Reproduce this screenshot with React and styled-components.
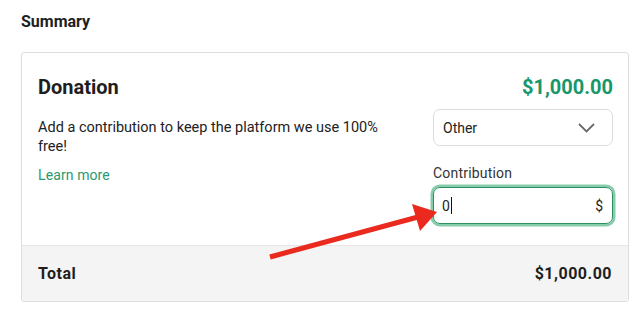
import React from 'react'
import styled, {createGlobalStyle} from 'styled-components'

const Global = createGlobalStyle`
body
{
  margin: 0;
  background: #ffffff;
  font-family: Roboto, "Liberation Sans", sans-serif;
  color: #222222;
}
`

const Page = styled.div`
position: relative;
width: 644px;
height: 316px;
padding: 12px 0 0 21px;
box-sizing: border-box;
`

const Heading = styled.h3`
margin: 0 0 20px 0;
font-size: 16px;
line-height: 20px;
font-weight: 700;
color: #1e1e1e;
`

const Card = styled.div`
width: 608px;
box-sizing: border-box;
border: 1px solid #dedede;
border-radius: 3px;
overflow: hidden;
`

const Body = styled.div`
padding: 21px 15px 21px 16px;
`

const HeaderRow = styled.div`
display: flex;
justify-content: space-between;
align-items: center;
height: 26px;
`

const Title = styled.h2`
margin: 0;
font-size: 20px;
font-weight: 700;
color: #1e1e1e;
`

const Amount = styled.span`
font-size: 20px;
font-weight: 700;
color: ${p => p.green ? "#17976a" : "#1e1e1e"};
`

const Content = styled.div`
display: flex;
justify-content: space-between;
margin-top: 9px;
`

const Left = styled.div`
width: 350px;
padding-top: 9px;
`

const Text = styled.p`
margin: 0;
font-size: 14.5px;
line-height: 19px;
letter-spacing: 0;
color: #222222;
`

const Link = styled.a`
display: block;
margin-top: 9px;
font-size: 14px;
line-height: 20px;
letter-spacing: 0.1px;
color: #2a9a6c;
text-decoration: none;
`

const Right = styled.div`
width: 180px;
display: flex;
flex-direction: column;
`

const Select = styled.div`
height: 37px;
box-sizing: border-box;
border: 1px solid #dcdcdc;
border-radius: 7px;
display: flex;
align-items: center;
justify-content: space-between;
padding: 0 17px 0 9px;
font-size: 14px;
color: #222222;
`

const Label = styled.label`
margin-top: 17px;
font-size: 14px;
line-height: 20px;
letter-spacing: 0.2px;
color: #333333;
`

const Field = styled.div`
margin-top: 4px;
height: 37px;
box-sizing: border-box;
border: 1.5px solid #2e8f63;
border-radius: 7px;
box-shadow: 0 0 0 2.5px #86cbaa;
display: flex;
align-items: center;
justify-content: space-between;
padding: 0 9px 0 8px;
font-size: 14px;
color: #222222;
`

const Value = styled.span`
display: flex;
align-items: center;
`

const Caret = styled.span`
display: inline-block;
width: 1px;
height: 17px;
background: #111111;
margin-left: 1px;
`

const Footer = styled.div`
height: 56px;
box-sizing: border-box;
background: #f4f4f4;
border-top: 1px solid #e6e6e6;
display: flex;
align-items: center;
justify-content: space-between;
padding: 0 16px;
`

const Strong = styled.span`
font-size: 16px;
font-weight: 700;
letter-spacing: 0.5px;
color: #1e1e1e;
`

const Arrow = styled.svg`
position: absolute;
left: 0;
top: 0;
pointer-events: none;
`

function App() {
  return (
    <Page>
      <Global />
      <Heading>Summary</Heading>
      <Card>
        <Body>
          <HeaderRow>
            <Title>Donation</Title>
            <Amount green>$1,000.00</Amount>
          </HeaderRow>
          <Content>
            <Left>
              <Text>Add a contribution to keep the platform we use 100% free!</Text>
              <Link href="#">Learn more</Link>
            </Left>
            <Right>
              <Select>
                <span>Other</span>
                <svg width="17" height="10" viewBox="0 0 17 10">
                  <path d="M1 1 L8.5 8.5 L16 1" fill="none" stroke="#6b6b6b" strokeWidth="1.8" />
                </svg>
              </Select>
              <Label>Contribution</Label>
              <Field>
                <Value>0<Caret /></Value>
                <span>$</span>
              </Field>
            </Right>
          </Content>
        </Body>
        <Footer>
          <Strong>Total</Strong>
          <Strong>$1,000.00</Strong>
        </Footer>
      </Card>
      <Arrow width="644" height="316">
        <line x1="270" y1="257" x2="418" y2="217" stroke="#ea2a1f" strokeWidth="5" strokeLinecap="butt" />
        <polygon points="437,212 420,231 412,204" fill="#ea2a1f" />
      </Arrow>
    </Page>
  )
}

export default App
